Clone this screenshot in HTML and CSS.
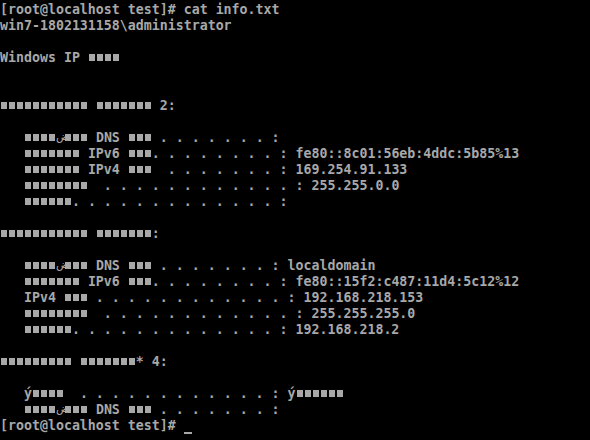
FILE: index.html
```html
<!DOCTYPE html>
<html>
<head>
<meta charset="utf-8">
<link rel="stylesheet" href="styles.css">
</head>
<body>
<pre class="term">[root@localhost test]# cat info.txt
win7-1802131158\administrator

Windows IP <span class="b">■■■■</span>


<span class="b">■■■■■■■■■■■</span> <span class="b">■■■■■■■</span> 2:

   <span class="b">■■■■</span><span class="ar">ض</span><span class="b">■■■</span> DNS <span class="b">■■■</span> . . . . . . . :
   <span class="b">■■■■■■■</span> IPv6 <span class="b">■■■</span>. . . . . . . . : fe80::8c01:56eb:4ddc:5b85%13
   <span class="b">■■■■■■■</span> IPv4 <span class="b">■■■</span>  . . . . . . . : 169.254.91.133
   <span class="b">■■■■■■■■</span>  . . . . . . . . . . . . : 255.255.0.0
   <span class="b">■■■■■■</span>. . . . . . . . . . . . . :

<span class="b">■■■■■■■■■■■</span> <span class="b">■■■■■■■</span>:

   <span class="b">■■■■</span><span class="ar">ض</span><span class="b">■■■</span> DNS <span class="b">■■■</span> . . . . . . . : localdomain
   <span class="b">■■■■■■■</span> IPv6 <span class="b">■■■</span>. . . . . . . . : fe80::15f2:c487:11d4:5c12%12
   IPv4 <span class="b">■■■</span> . . . . . . . . . . . . : 192.168.218.153
   <span class="b">■■■■■■■■</span>  . . . . . . . . . . . . : 255.255.255.0
   <span class="b">■■■■■■</span>. . . . . . . . . . . . . : 192.168.218.2

<span class="b">■■■■■■■■■</span> <span class="b">■■■■■■■</span>* 4:

   ý<span class="b">■■■■</span>  . . . . . . . . . . . . : ý<span class="b">■■■■■■</span>
   <span class="b">■■■■</span><span class="ar">ض</span><span class="b">■■■</span> DNS <span class="b">■■■</span> . . . . . . . :
[root@localhost test]# <span class="cur"> </span></pre>
</body>
</html>
```
FILE: styles.css
```css
html, body {
  margin: 0;
  padding: 0;
  background: #000;
  height: 100%;
  overflow: hidden;
}

.term {
  margin: 0;
  padding: 2px 0 0 0;
  font-family: "DejaVu Sans Mono", monospace;
  font-size: 13.288px;
  font-weight: bold;
  line-height: 16px;
  color: #a8a8a8;
  white-space: pre;
}

.b {
  display: inline-block;
  height: 16px;
  vertical-align: top;
  color: transparent;
  font-size: 6.644px;
  letter-spacing: 4px;
  line-height: 16px;
  background-image: linear-gradient(90deg, transparent 1px, #a8a8a8 1px, #a8a8a8 7px, transparent 7px);
  background-size: 8px 7px;
  background-position: 0 4px;
  background-repeat: repeat-x;
}

.ar {
  display: inline-block;
  width: 8px;
  height: 16px;
  vertical-align: top;
  text-align: center;
  font-family: "DejaVu Sans", sans-serif;
  font-weight: normal;
  font-size: 11px;
  line-height: 13px;
}

.cur {
  display: inline-block;
  width: 8px;
  height: 14px;
  vertical-align: top;
  border-bottom: 2px solid #a8a8a8;
}
```
